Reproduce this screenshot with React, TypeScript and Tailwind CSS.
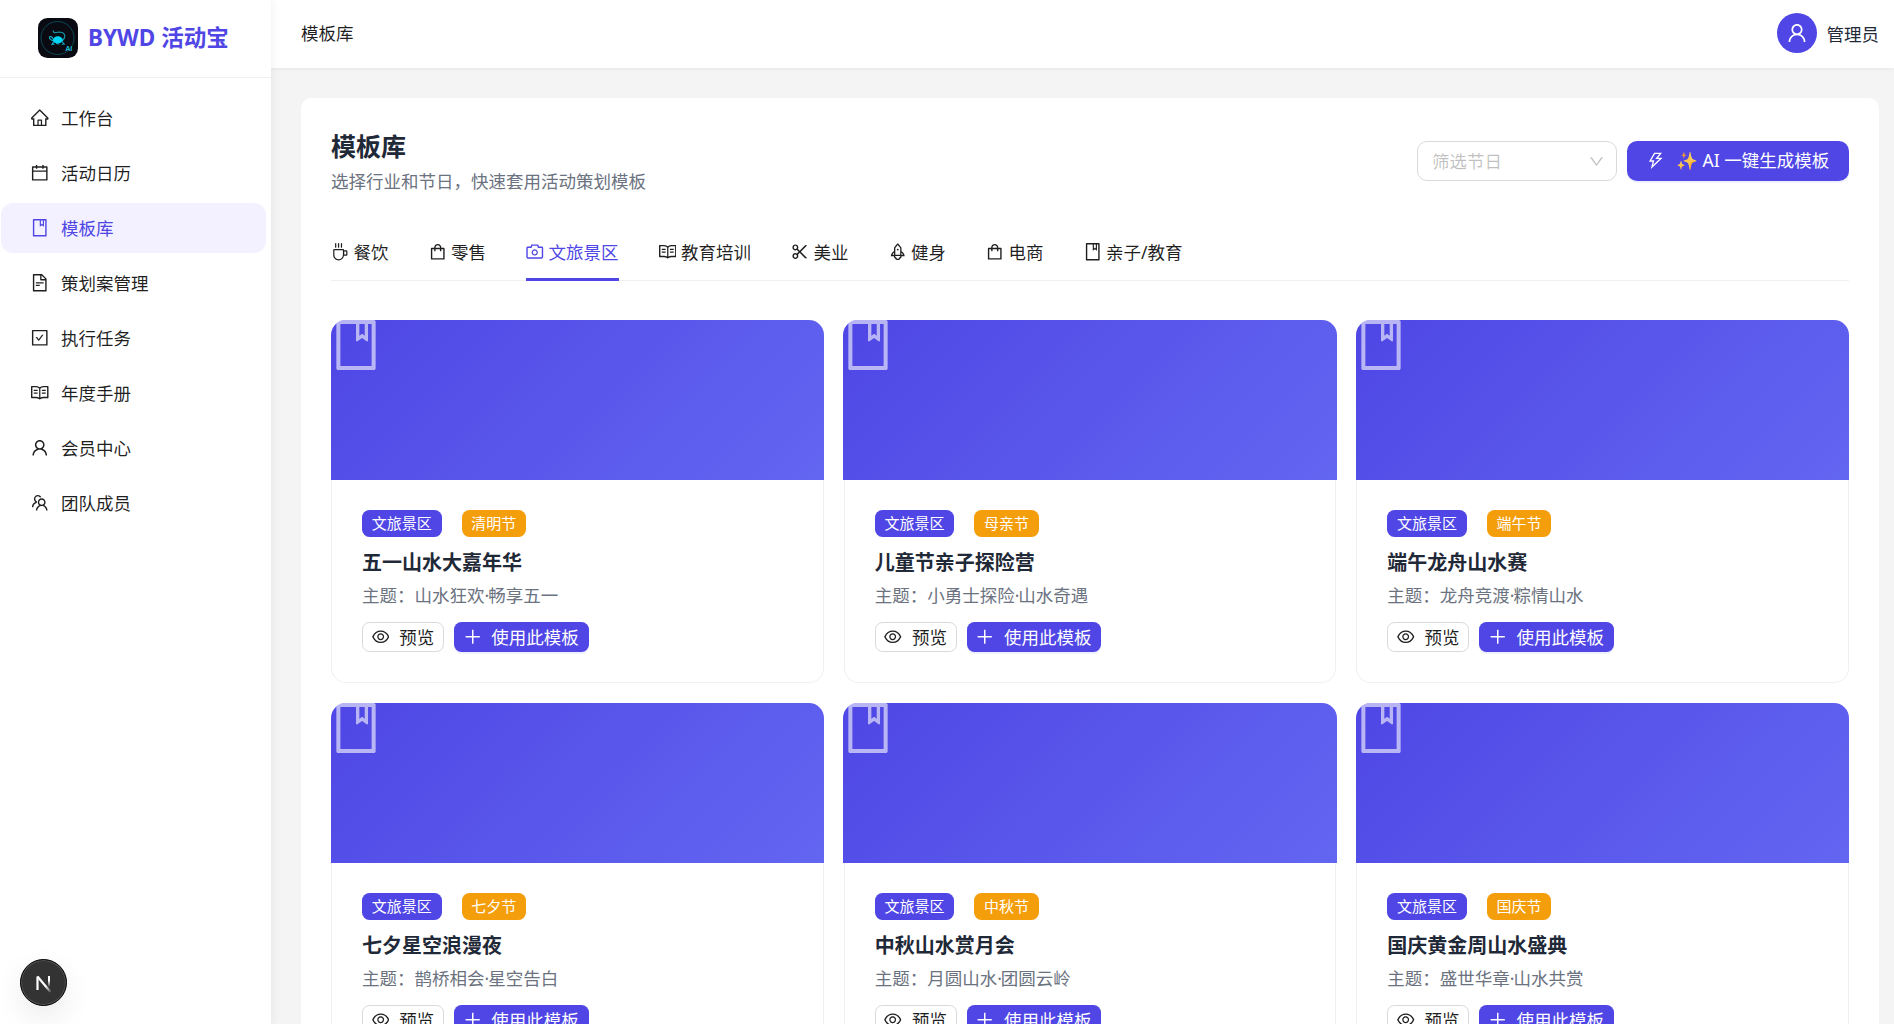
import type { IconType } from "react-icons";
import {
  AiOutlineBook,
  AiOutlineCalendar,
  AiOutlineCamera,
  AiOutlineCheckSquare,
  AiOutlineCoffee,
  AiOutlineDown,
  AiOutlineEye,
  AiOutlineFileText,
  AiOutlineHome,
  AiOutlinePlus,
  AiOutlineRead,
  AiOutlineRocket,
  AiOutlineScissor,
  AiOutlineShopping,
  AiOutlineTeam,
  AiOutlineThunderbolt,
  AiOutlineUser,
} from "react-icons/ai";
import clsx from "clsx";

type NavItem = { label: string; icon: IconType; box?: string };
type Template = { title: string; theme: [string, string]; festival: string };

// trims the built-in margin of the ant icons
const ICON_BOX = "64 64 896 896";

const NAV: NavItem[] = [
  { label: "工作台", icon: AiOutlineHome },
  { label: "活动日历", icon: AiOutlineCalendar },
  { label: "模板库", icon: AiOutlineBook },
  { label: "策划案管理", icon: AiOutlineFileText },
  { label: "执行任务", icon: AiOutlineCheckSquare },
  { label: "年度手册", icon: AiOutlineRead },
  { label: "会员中心", icon: AiOutlineUser },
  { label: "团队成员", icon: AiOutlineTeam },
];

const TABS: NavItem[] = [
  { label: "餐饮", icon: AiOutlineCoffee, box: "0 0 1024 1024" },
  { label: "零售", icon: AiOutlineShopping },
  { label: "文旅景区", icon: AiOutlineCamera },
  { label: "教育培训", icon: AiOutlineRead },
  { label: "美业", icon: AiOutlineScissor },
  { label: "健身", icon: AiOutlineRocket },
  { label: "电商", icon: AiOutlineShopping },
  { label: "亲子/教育", icon: AiOutlineBook },
];

const TEMPLATES: Template[] = [
  { title: "五一山水大嘉年华", theme: ["山水狂欢", "畅享五一"], festival: "清明节" },
  { title: "儿童节亲子探险营", theme: ["小勇士探险", "山水奇遇"], festival: "母亲节" },
  { title: "端午龙舟山水赛", theme: ["龙舟竞渡", "粽情山水"], festival: "端午节" },
  { title: "七夕星空浪漫夜", theme: ["鹊桥相会", "星空告白"], festival: "七夕节" },
  { title: "中秋山水赏月会", theme: ["月圆山水", "团圆云岭"], festival: "中秋节" },
  { title: "国庆黄金周山水盛典", theme: ["盛世华章", "山水共赏"], festival: "国庆节" },
];

function Logo() {
  return (
    <svg viewBox="0 0 40 40" className="size-10 shrink-0">
      <rect width="40" height="40" rx="9.5" fill="#0a0a12" />
      <circle cx="19.5" cy="20" r="16.5" fill="none" stroke="#0b4a55" strokeWidth="1" />
      <path d="M15.500 12.500c-.8 1.600.5 2.300 2.500 2 4-.6 8.500-.6 8.800 3.500.1 2-1 3.500-2.800 5" fill="none" stroke="#1593a5" strokeWidth="1.2" />
      <path d="M14.500 23c.8-3.800 3.500-5 6-4.800 2.600.2 4.200 2 4.500 4.600l-2.500 2.200h-5.500z" fill="#00d5f5" />
      <path d="M15.500 22.500c-2.500 0-4.500-2-4-3.700 1-1 2.500.4 3.700 2M15.500 24l-1.500 2.500 2.500-.5M24 23.500l2.200 2.500-2.400.2M18 25.500l3.500.5" fill="none" stroke="#12b3cc" strokeWidth="1.1" />
      <text x="27.500" y="33" fontSize="7" fontWeight="700" fill="#19b5cb" fontFamily="Noto Sans, sans-serif">Ai</text>
    </svg>
  );
}

function Sidebar() {
  return (
    <aside className="relative z-20 flex w-[271px] shrink-0 flex-col bg-white shadow-[2px_0_8px_rgba(0,0,0,0.05)]">
      <div className="flex h-[78px] items-center gap-[10px] border-b border-[#f0f0f0] pb-px pl-[38px]">
        <Logo />
        <span className="text-[22.5px] font-bold text-[#4f46e5]">BYWD 活动宝</span>
      </div>
      <nav className="flex flex-col gap-[5px] pt-[15px] pr-[5px] pl-px">
        {NAV.map(({ label, icon: Icon }) => (
          <a
            key={label}
            className={clsx(
              "flex h-[50px] items-center gap-[12.5px] rounded-[12px] pl-[30px]",
              label === "模板库" ? "bg-[#f3f0ff] text-[#4f46e5]" : "text-black/88"
            )}
          >
            <Icon viewBox={ICON_BOX} className="size-[17.5px]" />
            <span className="pt-[1.5px]">{label}</span>
          </a>
        ))}
      </nav>
    </aside>
  );
}

function Header() {
  return (
    <header className="z-10 flex h-[68px] shrink-0 items-center justify-between bg-white pr-[15px] pl-[30px] shadow-[0_1px_4px_rgba(0,0,0,0.06)]">
      <span className="text-black/88">模板库</span>
      <div className="flex items-center gap-[10px]">
        <span className="mb-[2px] flex size-10 items-center justify-center rounded-full bg-[#4f46e5] text-white">
          <AiOutlineUser viewBox={ICON_BOX} className="size-5" />
        </span>
        <span className="pt-[2px] text-[#1f2937]">管理员</span>
      </div>
    </header>
  );
}

function TemplateCard({ title, theme, festival }: Template) {
  return (
    <article className="h-[363px]">
      <div className="-mx-[0.25px] h-40 overflow-hidden rounded-t-[15px] bg-linear-135 from-[#4f46e5] to-[#6366f1]">
        <AiOutlineBook viewBox={ICON_BOX} className="size-[50px] text-white/60" />
      </div>
      <div className="h-[203px] rounded-b-[15px] border border-t-0 border-[#f0f0f0] px-[30px] pt-[30px]">
        <div className="flex gap-[20px] text-[15px] leading-[27px] text-white">
          <span className="rounded-[7.5px] bg-[#4f46e5] px-[9.75px]">文旅景区</span>
          <span className="rounded-[7.5px] bg-[#f59e0b] px-[9.75px]">{festival}</span>
        </div>
        <h3 className="mt-[10px] text-[20px] leading-[31px] font-bold text-[#1f2937]">{title}</h3>
        <p className="mt-[4px] leading-[27px] text-[#6b7280]">
          主题：{theme[0]}
          <span className="-mr-px">·</span>
          {theme[1]}
        </p>
        <div className="mt-[13px] flex gap-[10px]">
          <button className="flex h-[30px] items-center gap-[10px] rounded-[7.5px] border border-[#d9d9d9] px-[8.75px] text-black/88">
            <AiOutlineEye viewBox={ICON_BOX} className="size-[17.5px]" />
            <span className="pt-[3px]">预览</span>
          </button>
          <button className="flex h-[30px] items-center gap-[10px] rounded-[7.5px] bg-[#4f46e5] px-[9.75px] text-white shadow-[0_2px_0_rgba(79,70,229,0.08)]">
            <AiOutlinePlus viewBox={ICON_BOX} className="size-[17.5px]" />
            <span className="pt-[3px]">使用此模板</span>
          </button>
        </div>
      </div>
    </article>
  );
}

export default function App() {
  return (
    <div className="flex h-screen overflow-hidden bg-[#f4f4f4] font-['Noto_Sans','Noto_Sans_CJK_SC',sans-serif] text-[17.5px] leading-[27.5px]">
      <Sidebar />
      <div className="flex min-w-0 flex-1 flex-col">
        <Header />
        <main className="mt-[30px] mr-[15px] ml-[30px] flex-1 overflow-hidden rounded-t-[10px] bg-white px-[30px]">
          <div className="flex items-center justify-between pt-[29px]">
            <div>
              <h1 className="text-[25px] leading-[39px] font-bold text-[#1f2937]">模板库</h1>
              <p className="pt-[1.5px] text-[#6b7280]">选择行业和节日，快速套用活动策划模板</p>
            </div>
            <div className="flex gap-[10px]">
              <div className="flex h-10 w-[200px] items-center justify-between rounded-[10px] border border-[#d9d9d9] pr-[12.5px] pl-[14px] text-black/25">
                <span className="pt-px">筛选节日</span>
                <AiOutlineDown viewBox={ICON_BOX} className="size-[15px]" />
              </div>
              <button className="flex h-10 w-[222px] items-center gap-[11.5px] rounded-[10px] bg-[#4f46e5] pl-[20px] whitespace-nowrap text-white shadow-[0_2px_0_rgba(79,70,229,0.08)]">
                <AiOutlineThunderbolt viewBox={ICON_BOX} className="size-[17.5px]" />
                <span>
                  <span className="inline-block -hue-rotate-[22deg]">✨</span> AI 一键生成模板
                </span>
              </button>
            </div>
          </div>

          <div className="mt-[28.5px] flex h-[57px] gap-10 border-b border-[#f0f0f0]">
            {TABS.map(({ label, icon: Icon, box = ICON_BOX }) => (
              <div
                key={label}
                className={clsx(
                  "-mb-px flex items-center gap-[5px] border-b-3 pt-[3px]",
                  label === "文旅景区" ? "border-[#4f46e5] text-[#4f46e5]" : "border-transparent text-black/88"
                )}
              >
                <Icon viewBox={box} className="size-[17.5px]" />
                <span className="pt-[1.5px]">{label}</span>
              </div>
            ))}
          </div>

          <div className="mt-[39px] grid grid-cols-3 gap-5">
            {TEMPLATES.map((t) => (
              <TemplateCard key={t.title} {...t} />
            ))}
          </div>
        </main>
      </div>

      {/* Dev tools badge */}
      <div className="fixed bottom-[18px] left-[20px] z-30 flex size-[47px] items-center justify-center rounded-full border border-black bg-[#333] shadow-[0_12px_30px_rgba(0,0,0,0.08)] ring-1 ring-white/15 ring-inset">
        <svg viewBox="0 0 20 20" className="size-5" fill="none" strokeWidth="2.2">
          <defs>
            <linearGradient id="stem" x1="0" y1="0" x2="0" y2="1">
              <stop offset="0.4" stopColor="#fff" />
              <stop offset="1" stopColor="#fff" stopOpacity="0" />
            </linearGradient>
            <linearGradient id="slash" gradientUnits="userSpaceOnUse" x1="12" y1="13" x2="17" y2="19">
              <stop stopColor="#fff" />
              <stop offset="1" stopColor="#fff" stopOpacity="0.1" />
            </linearGradient>
          </defs>
          <path d="M3.500 17V3.500" stroke="#fff" />
          <path d="M3.500 3.500l13 15.500" stroke="url(#slash)" />
          <rect x="14" y="3" width="2" height="11" fill="url(#stem)" />
        </svg>
      </div>
    </div>
  );
}
